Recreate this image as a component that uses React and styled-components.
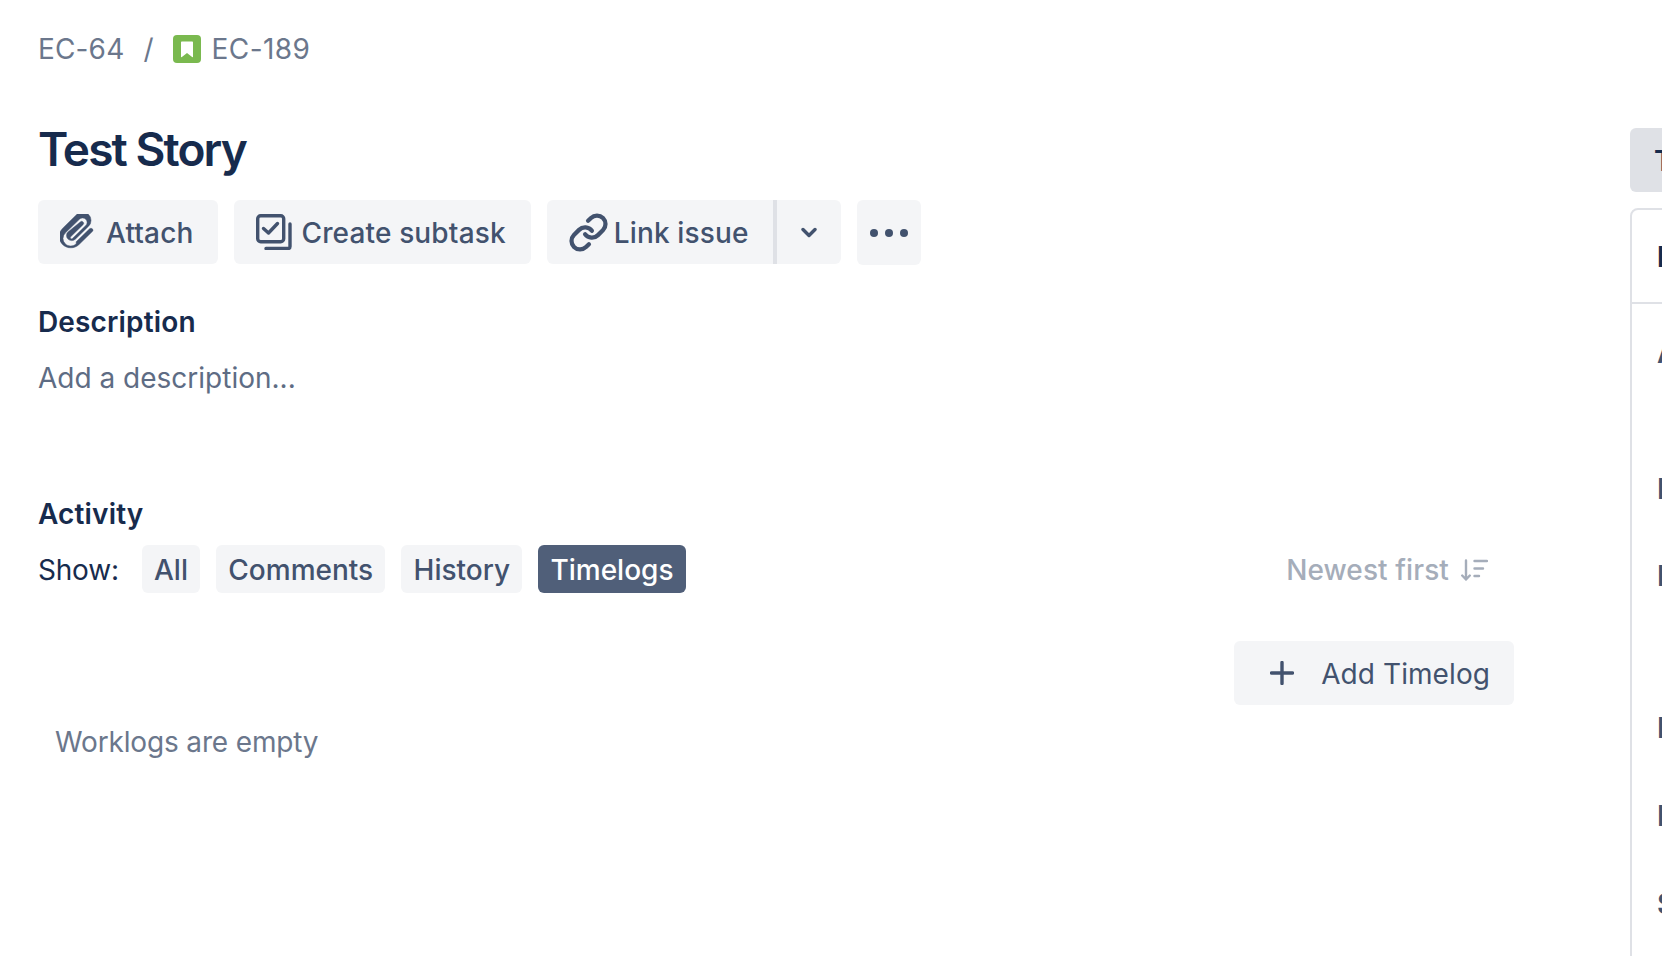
import styled, { createGlobalStyle } from "styled-components";
import { Link as LinkIcon } from "lucide-react";

const GlobalStyle = createGlobalStyle`
  html, body {
    margin: 0;
    padding: 0;
    background: #fff;
    overflow: hidden;
  }
  body {
    font-family: Inter, "Liberation Sans", sans-serif;
    -webkit-font-smoothing: antialiased;
  }
`;

function App() {
  return (
    <>
      <GlobalStyle />
      <Page>
        <Main>
          <Breadcrumbs>
            <Crumb>EC-64</Crumb>
            <Slash>/</Slash>
            <StoryIcon>
              <svg width="14" height="17" viewBox="0 0 14 17">
                <path d="M1 1.5C1 .9 1.4.5 2 .5h10c.6 0 1 .4 1 1v14.2c0 .5-.5.7-.9.4L7 12l-5.100 4.100c-.4.3-.9.1-.9-.4z" fill="#fff" />
              </svg>
            </StoryIcon>
            <Crumb $wide>EC-189</Crumb>
          </Breadcrumbs>
          <Title>Test Story</Title>
          <Actions>
            <ActionButton $pad="22px" $gap="11px" $right="25px">
              <svg width="35" height="36" viewBox="3.6 2.900 17.400 18.200" fill="#42526e" stroke="#42526e" strokeWidth="0.25">
                <path d="M11.643 17.965c-1.53 1.495-4.016 1.496-5.542.004a3.773 3.773 0 01.002-5.412l7.147-6.985a2.316 2.316 0 013.233-.003c.893.873.895 2.282.004 3.153l-6.703 6.55a.653.653 0 01-.914-.008.62.62 0 010-.902l6.229-6.087a.941.941 0 000-1.353 1 1 0 00-1.384 0L7.49 12.008a2.5 2.5 0 00.015 3.59 2.653 2.653 0 003.704.007l6.703-6.55a4.074 4.074 0 00-.004-5.859 4.316 4.316 0 00-6.025.003l-7.148 6.985a5.666 5.666 0 00-.002 8.125c2.31 2.258 6.054 2.256 8.364-.003l6.705-6.552a.94.94 0 00-.002-1.354 1 1 0 00-1.384 0l-6.773 6.565z" />
              </svg>
              Attach
            </ActionButton>
            <ActionButton $pad="22px" $gap="9px" $right="25px">
              <svg width="36" height="36" viewBox="0 0 36 36" fill="none" stroke="#42526e" strokeWidth="3.400" strokeLinecap="round" strokeLinejoin="round">
                <rect x="1.700" y="1.700" width="26" height="26" rx="3" />
                <path d="M7.500 14.500l5 4.500 9-9.500" />
                <path d="M34 10v22.500a2 2 0 0 1-2 2H10" />
              </svg>
              Create subtask
            </ActionButton>
            <SplitGroup>
              <ActionButton $split $pad="21px" $gap="5px" $right="24px">
                <LinkIcon size={41} color="#42526e" strokeWidth={2.5} />
                Link issue
              </ActionButton>
              <CaretButton>
                <svg width="16" height="11" viewBox="0 0 16 11" fill="none" stroke="#42526e" strokeWidth="3.400" strokeLinecap="round" strokeLinejoin="round">
                  <path d="M2 2.500l6 6 6-6" />
                </svg>
              </CaretButton>
            </SplitGroup>
            <MoreButton>
              <Dot />
              <Dot />
              <Dot />
            </MoreButton>
          </Actions>
          <SectionTitle $top={41}>Description</SectionTitle>
          <Placeholder>Add a description...</Placeholder>
          <SectionTitle $top={104}>Activity</SectionTitle>
          <FilterRow>
            <Filters>
              <ShowLabel>Show:</ShowLabel>
              <FilterPill>All</FilterPill>
              <FilterPill>Comments</FilterPill>
              <FilterPill>History</FilterPill>
              <FilterPill $active>Timelogs</FilterPill>
            </Filters>
            <SortToggle>
              Newest first
              <svg width="27" height="22" viewBox="0 0 27 22" fill="none" stroke="#a5adba" strokeWidth="2.400" strokeLinecap="round" strokeLinejoin="round">
                <path d="M5 1.500v19M1.200 16.500l3.800 4 3.800-4" />
                <path d="M13.500 2h12.500M13.500 9.500h8.500M13.500 17h4.500" />
              </svg>
            </SortToggle>
          </FilterRow>
          <AddRow>
            <AddButton>
              <svg width="24" height="24" viewBox="0 0 24 24" fill="none" stroke="#42526e" strokeWidth="3.400" strokeLinecap="round">
                <path d="M12 1.500v21M1.500 12h21" />
              </svg>
              Add Timelog
            </AddButton>
          </AddRow>
          <EmptyNote>Worklogs are empty</EmptyNote>
        </Main>
        <Side>
          <StatusButton>To Do</StatusButton>
          <DetailsPanel>
            <PanelHeader>Details</PanelHeader>
            <PanelBody>
              <Field $height={136}>Assignee</Field>
              <Field $height={87}>Reporter</Field>
              <Field $height={152}>Development</Field>
              <Field $height={88}>Priority</Field>
              <Field $height={88}>Labels</Field>
              <Field $height={88}>Sprint</Field>
            </PanelBody>
          </DetailsPanel>
        </Side>
      </Page>
    </>
  );
}

export default App;

const Page = styled.div`
  display: flex;
  width: 1662px;
  height: 956px;
  overflow: hidden;
`;

const Main = styled.main`
  flex: none;
  box-sizing: border-box;
  width: 1630px;
  padding: 33px 116px 0 38px;
`;

const Breadcrumbs = styled.nav`
  display: flex;
  align-items: center;
  height: 32px;
  font-size: 28px;
  line-height: 32px;
  color: #6b778c;
`;

const Crumb = styled.span`
  letter-spacing: ${(p) => (p.$wide ? "0.45px" : "0.15px")};
`;

const Slash = styled.span`
  margin: 0 20px 0 19px;
`;

const StoryIcon = styled.span`
  display: flex;
  align-items: center;
  justify-content: center;
  width: 28px;
  height: 28px;
  margin-right: 10px;
  border-radius: 4px;
  background: #7ab94f;
`;

const Title = styled.h1`
  margin: 56px 0 0;
  font-size: 46px;
  line-height: 56px;
  font-weight: 600;
  letter-spacing: -1.9px;
  color: #172b4d;
`;

const Actions = styled.div`
  display: flex;
  gap: 16px;
  margin-top: 23px;
`;

const ActionButton = styled.button`
  display: flex;
  align-items: center;
  gap: ${(p) => p.$gap};
  height: 64px;
  padding: 2px ${(p) => p.$right} 0 ${(p) => p.$pad};
  border: none;
  border-radius: ${(p) => (p.$split ? "6px 0 0 6px" : "6px")};
  background: #f4f5f7;
  font: 500 28px Inter, sans-serif;
  letter-spacing: 0.15px;
  color: #42526e;

  svg {
    margin-top: -2px;
  }
`;

const SplitGroup = styled.div`
  display: flex;
`;

const CaretButton = styled.button`
  display: flex;
  align-items: center;
  justify-content: center;
  width: 68px;
  height: 64px;
  padding: 0;
  border: none;
  border-left: 4px solid #dfe1e6;
  border-radius: 0 6px 6px 0;
  background: #f4f5f7;
`;

const MoreButton = styled.button`
  display: flex;
  align-items: center;
  justify-content: center;
  gap: 7px;
  width: 64px;
  height: 65px;
  padding: 0;
  border: none;
  border-radius: 6px;
  background: #f4f5f7;
`;

const Dot = styled.span`
  width: 8px;
  height: 8px;
  border-radius: 50%;
  background: #42526e;
`;

const SectionTitle = styled.h2`
  margin: ${(p) => p.$top}px 0 0;
  font-size: 28px;
  line-height: 32px;
  font-weight: 600;
  letter-spacing: 0.15px;
  color: #172b4d;
`;

const Placeholder = styled.div`
  margin-top: 24px;
  font-size: 28px;
  line-height: 32px;
  color: #5e6c84;
`;

const FilterRow = styled.div`
  display: flex;
  align-items: center;
  justify-content: space-between;
  margin-top: 15px;
  padding-right: 26px;
`;

const Filters = styled.div`
  display: flex;
  align-items: center;
  gap: 16px;
`;

const ShowLabel = styled.span`
  margin: 2px 7px 0 0;
  font-size: 28px;
  letter-spacing: -0.2px;
  color: #172b4d;
`;

const FilterPill = styled.button`
  height: 48px;
  padding: 2px 12.2px 0;
  border: none;
  border-radius: 6px;
  background: ${(p) => (p.$active ? "#505f79" : "#f4f5f7")};
  font: 500 28px Inter, sans-serif;
  color: ${(p) => (p.$active ? "#fff" : "#42526e")};
`;

const SortToggle = styled.div`
  display: flex;
  align-items: center;
  gap: 12px;
  padding-top: 2px;
  font-size: 28px;
  font-weight: 500;
  letter-spacing: 0.1px;
  color: #a5adba;
`;

const AddRow = styled.div`
  display: flex;
  justify-content: flex-end;
  margin-top: 48px;
`;

const AddButton = styled.button`
  display: flex;
  align-items: center;
  gap: 27px;
  height: 64px;
  padding: 2px 24px 0 36px;
  border: none;
  border-radius: 6px;
  background: #f4f5f7;
  font: 400 28px Inter, sans-serif;
  letter-spacing: 0.08px;
  color: #42526e;

  svg {
    margin-top: -2px;
  }
`;

const EmptyNote = styled.div`
  margin: 21px 0 0 17px;
  font-size: 28px;
  line-height: 32px;
  letter-spacing: -0.15px;
  color: #6b778c;
`;

const Side = styled.aside`
  flex: none;
  width: 480px;
  padding-top: 128px;
`;

const StatusButton = styled.div`
  box-sizing: border-box;
  width: 120px;
  height: 64px;
  padding-left: 24px;
  border-radius: 6px;
  background: #dfe1e6;
  font-size: 28px;
  font-weight: 600;
  line-height: 66px;
  color: #172b4d;
`;

const DetailsPanel = styled.section`
  box-sizing: border-box;
  height: 800px;
  margin-top: 16px;
  border: 2px solid #dfe1e6;
  border-radius: 8px;
`;

const PanelHeader = styled.h3`
  box-sizing: border-box;
  height: 94px;
  margin: 0;
  padding-left: 25px;
  border-bottom: 2px solid #dfe1e6;
  font-size: 28px;
  font-weight: 700;
  line-height: 94px;
  color: #172b4d;
`;

const PanelBody = styled.div`
  padding: 33px 0 0 25px;
`;

const Field = styled.div`
  height: ${(p) => p.$height}px;
  font-size: 28px;
  font-weight: 600;
  line-height: 32px;
  color: #42526e;
`;
